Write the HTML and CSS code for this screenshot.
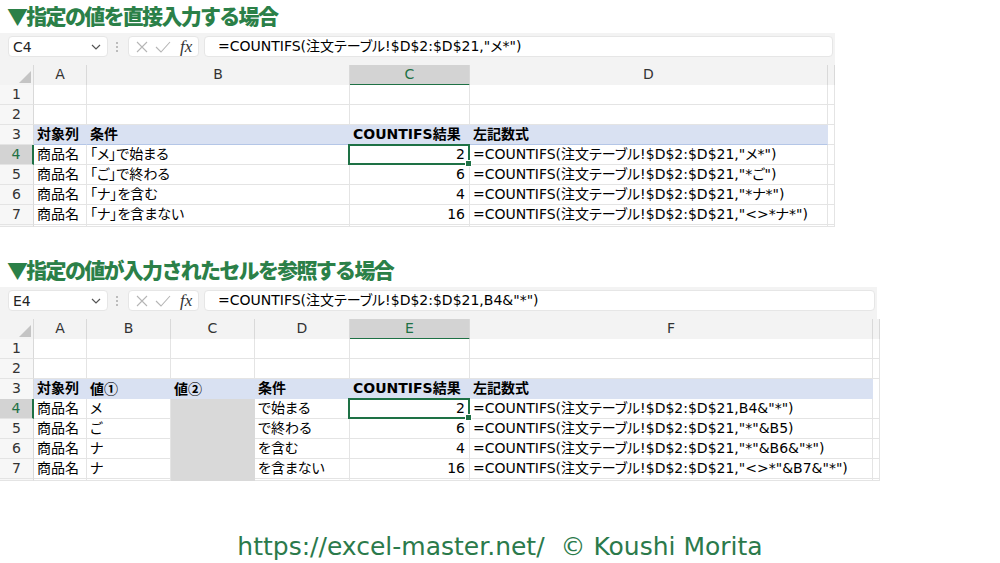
FILE: index.html
```html
<!DOCTYPE html>
<html lang="ja">
<head>
<meta charset="utf-8">
<title>COUNTIFS</title>
<link rel="stylesheet" href="styles.css">
</head>
<body>
<section class="block">
  <h2 class="title">▼指定の値を直接入力する場合</h2>
  <div class="sheet sheet1">
    <div class="fbar">
      <div class="namebox"><span>C4</span><svg class="chev" width="10" height="6" viewBox="0 0 10 6"><polyline points="1,1 5,5 9,1" fill="none" stroke="#555" stroke-width="1.2"/></svg></div>
      <svg class="dots" width="4" height="12" viewBox="0 0 4 12"><circle cx="2" cy="2" r="1" fill="#aaa"/><circle cx="2" cy="6" r="1" fill="#aaa"/><circle cx="2" cy="10" r="1" fill="#aaa"/></svg>
      <div class="btns">
        <svg width="14" height="14" viewBox="0 0 14 14"><path d="M2 2 L12 12 M12 2 L2 12" stroke="#b5b5b5" stroke-width="1.1"/></svg>
        <svg width="16" height="14" viewBox="0 0 16 14"><polyline points="1,7 6,12 15,2" fill="none" stroke="#b5b5b5" stroke-width="1.1"/></svg>
        <span class="fx">fx</span>
      </div>
      <div class="formula">=COUNTIFS(注文テーブル!$D$2:$D$21,"メ*")</div>
    </div>
    <div class="grid">
      <div class="row hdr">
        <div class="c corner"><svg width="12" height="12" viewBox="0 0 12 12"><polygon points="12,0 12,12 0,12" fill="#c4c4c4"/></svg></div>
        <div class="c">A</div><div class="c">B</div><div class="c selc">C</div><div class="c">D</div><div class="c"></div>
      </div>
      <div class="row"><div class="c rh">1</div><div class="c"></div><div class="c"></div><div class="c"></div><div class="c"></div><div class="c"></div></div>
      <div class="row"><div class="c rh">2</div><div class="c"></div><div class="c"></div><div class="c"></div><div class="c"></div><div class="c"></div></div>
      <div class="row"><div class="c rh">3</div><div class="c band">対象列</div><div class="c band">条件</div><div class="c band">COUNTIFS結果</div><div class="c band">左記数式</div><div class="c"></div></div>
      <div class="row"><div class="c rh selr">4</div><div class="c">商品名</div><div class="c">「メ」で始まる</div><div class="c num act">2</div><div class="c">=COUNTIFS(注文テーブル!$D$2:$D$21,"メ*")</div><div class="c"></div></div>
      <div class="row"><div class="c rh">5</div><div class="c">商品名</div><div class="c">「ご」で終わる</div><div class="c num">6</div><div class="c">=COUNTIFS(注文テーブル!$D$2:$D$21,"*ご")</div><div class="c"></div></div>
      <div class="row"><div class="c rh">6</div><div class="c">商品名</div><div class="c">「ナ」を含む</div><div class="c num">4</div><div class="c">=COUNTIFS(注文テーブル!$D$2:$D$21,"*ナ*")</div><div class="c"></div></div>
      <div class="row"><div class="c rh">7</div><div class="c">商品名</div><div class="c">「ナ」を含まない</div><div class="c num">16</div><div class="c">=COUNTIFS(注文テーブル!$D$2:$D$21,"&lt;&gt;*ナ*")</div><div class="c"></div></div>
      <div class="row part"><div class="c rh"></div><div class="c"></div><div class="c"></div><div class="c"></div><div class="c"></div><div class="c"></div></div>
    </div>
  </div>
</section>

<section class="block block2">
  <h2 class="title">▼指定の値が入力されたセルを参照する場合</h2>
  <div class="sheet sheet2">
    <div class="fbar">
      <div class="namebox"><span>E4</span><svg class="chev" width="10" height="6" viewBox="0 0 10 6"><polyline points="1,1 5,5 9,1" fill="none" stroke="#555" stroke-width="1.2"/></svg></div>
      <svg class="dots" width="4" height="12" viewBox="0 0 4 12"><circle cx="2" cy="2" r="1" fill="#aaa"/><circle cx="2" cy="6" r="1" fill="#aaa"/><circle cx="2" cy="10" r="1" fill="#aaa"/></svg>
      <div class="btns">
        <svg width="14" height="14" viewBox="0 0 14 14"><path d="M2 2 L12 12 M12 2 L2 12" stroke="#b5b5b5" stroke-width="1.1"/></svg>
        <svg width="16" height="14" viewBox="0 0 16 14"><polyline points="1,7 6,12 15,2" fill="none" stroke="#b5b5b5" stroke-width="1.1"/></svg>
        <span class="fx">fx</span>
      </div>
      <div class="formula">=COUNTIFS(注文テーブル!$D$2:$D$21,B4&amp;"*")</div>
    </div>
    <div class="grid">
      <div class="row hdr">
        <div class="c corner"><svg width="12" height="12" viewBox="0 0 12 12"><polygon points="12,0 12,12 0,12" fill="#c4c4c4"/></svg></div>
        <div class="c">A</div><div class="c">B</div><div class="c">C</div><div class="c">D</div><div class="c selc">E</div><div class="c">F</div><div class="c"></div>
      </div>
      <div class="row"><div class="c rh">1</div><div class="c"></div><div class="c"></div><div class="c"></div><div class="c"></div><div class="c"></div><div class="c"></div><div class="c"></div></div>
      <div class="row"><div class="c rh">2</div><div class="c"></div><div class="c"></div><div class="c"></div><div class="c"></div><div class="c"></div><div class="c"></div><div class="c"></div></div>
      <div class="row"><div class="c rh">3</div><div class="c band">対象列</div><div class="c band">値<span class="cj">①</span></div><div class="c band">値<span class="cj">②</span></div><div class="c band">条件</div><div class="c band">COUNTIFS結果</div><div class="c band">左記数式</div><div class="c"></div></div>
      <div class="row"><div class="c rh selr">4</div><div class="c">商品名</div><div class="c">メ</div><div class="c fill"></div><div class="c">で始まる</div><div class="c num act">2</div><div class="c">=COUNTIFS(注文テーブル!$D$2:$D$21,B4&amp;"*")</div><div class="c"></div></div>
      <div class="row"><div class="c rh">5</div><div class="c">商品名</div><div class="c">ご</div><div class="c fill"></div><div class="c">で終わる</div><div class="c num">6</div><div class="c">=COUNTIFS(注文テーブル!$D$2:$D$21,"*"&amp;B5)</div><div class="c"></div></div>
      <div class="row"><div class="c rh">6</div><div class="c">商品名</div><div class="c">ナ</div><div class="c fill"></div><div class="c">を含む</div><div class="c num">4</div><div class="c">=COUNTIFS(注文テーブル!$D$2:$D$21,"*"&amp;B6&amp;"*")</div><div class="c"></div></div>
      <div class="row"><div class="c rh">7</div><div class="c">商品名</div><div class="c">ナ</div><div class="c fill"></div><div class="c">を含まない</div><div class="c num">16</div><div class="c">=COUNTIFS(注文テーブル!$D$2:$D$21,"&lt;&gt;*"&amp;B7&amp;"*")</div><div class="c"></div></div>
      <div class="row part"><div class="c rh"></div><div class="c"></div><div class="c"></div><div class="c fill"></div><div class="c"></div><div class="c"></div><div class="c"></div><div class="c"></div></div>
    </div>
  </div>
</section>

<footer class="credit">https://excel-master.net/&nbsp; © Koushi Morita</footer>
</body>
</html>
```

FILE: styles.css
```css
* { box-sizing: border-box; }
html, body { margin: 0; padding: 0; }
body {
  width: 1000px;
  height: 563px;
  overflow: hidden;
  background: #fff;
  color: #000;
  font-family: "DejaVu Sans", "Noto Sans CJK JP", sans-serif;
}
.title {
  margin: 0;
  height: 33px;
  padding-left: 7px;
  font-family: "Noto Sans CJK JP", sans-serif;
  font-weight: 900;
  font-size: 21px;
  line-height: 31px;
  letter-spacing: -1.7px;
  color: #2b8048;
}
.block2 { margin-top: 27px; }

.sheet { background: #f3f3f3; }
.sheet1 { width: 835px; }
.sheet2 { width: 877px; }

.fbar {
  display: flex;
  align-items: center;
  height: 32px;
  padding: 3px 2px 8px 8px;
}
.namebox {
  width: 100px;
  height: 21px;
  background: #fff;
  border: 1px solid #e6e6e6;
  border-radius: 4px;
  display: flex;
  align-items: center;
  justify-content: space-between;
  padding: 0 6px 0 4px;
  font-size: 14px;
  color: #222;
}
.dots { margin-left: 7px; }
.btns {
  margin-left: 9px;
  width: 71px;
  height: 21px;
  background: #fff;
  border: 1px solid #e6e6e6;
  border-radius: 4px;
  display: flex;
  align-items: center;
  gap: 6px;
  padding-left: 6px;
}
.fx {
  font-family: "Liberation Serif", serif;
  font-style: italic;
  font-size: 17px;
  color: #333;
  margin-left: 3px;
}
.formula {
  flex: 1;
  margin-left: 5px;
  height: 21px;
  background: #fff;
  border: 1px solid #e6e6e6;
  border-radius: 4px;
  font-size: 14px;
  line-height: 19px;
  padding-left: 13px;
  font-feature-settings: "palt";
  white-space: nowrap;
}

.grid { background: #fff; }
.row { display: grid; height: 20px; }
.sheet1 .row { grid-template-columns: 34px 53px 263px 120px 358px 7px; }
.sheet2 .row { grid-template-columns: 34px 53px 84px 84px 95px 120px 403px 4px; }
.row.part { height: 2px; }

.c {
  position: relative;
  background: #fff;
  border-right: 1px solid #e4e4e4;
  border-bottom: 1px solid #e4e4e4;
  font-size: 14px;
  line-height: 19px;
  padding: 0 3px;
  white-space: nowrap;
  font-feature-settings: "palt";
}
.cj { font-family: "Noto Sans CJK JP", sans-serif; font-weight: 700; }
.hdr .c {
  background: #f3f3f3;
  color: #333;
  text-align: center;
  border-right-color: #d9d9d9;
  border-bottom-color: #d0d0d0;
}
.hdr .corner {
  display: flex;
  align-items: flex-end;
  justify-content: flex-end;
  padding: 0 2px 2px 0;
}
.hdr .selc {
  background: #d3d3d3;
  color: #1e7145;
  border-bottom: 2px solid #1e7145;
}
.rh {
  background: #f7f7f7;
  color: #333;
  text-align: center;
  border-right-color: #d9d9d9;
}
.rh.selr {
  background: #d3d3d3;
  color: #1e7145;
  border-right: 2px solid #1e7145;
}
.band {
  background: #d9e1f2;
  border-right-color: #d9e1f2;
  border-bottom-color: #b4c6e7;
  font-weight: 700;
}
.fill {
  background: #d9d9d9;
  border-right-color: #d9d9d9;
  border-bottom-color: #d9d9d9;
}
.num { text-align: right; padding-right: 4px; }
.act::after {
  content: "";
  position: absolute;
  left: -2px;
  top: -1px;
  right: -1px;
  bottom: -1px;
  border: 2px solid #1e7145;
}
.act::before {
  content: "";
  position: absolute;
  right: -3px;
  bottom: -3px;
  width: 5px;
  height: 5px;
  background: #1e7145;
  border: 1px solid #fff;
  z-index: 2;
}

.credit {
  margin-top: 51px;
  text-align: center;
  font-family: "DejaVu Sans", sans-serif;
  font-size: 25px;
  line-height: 30px;
  color: #2b7a4b;
}
```
